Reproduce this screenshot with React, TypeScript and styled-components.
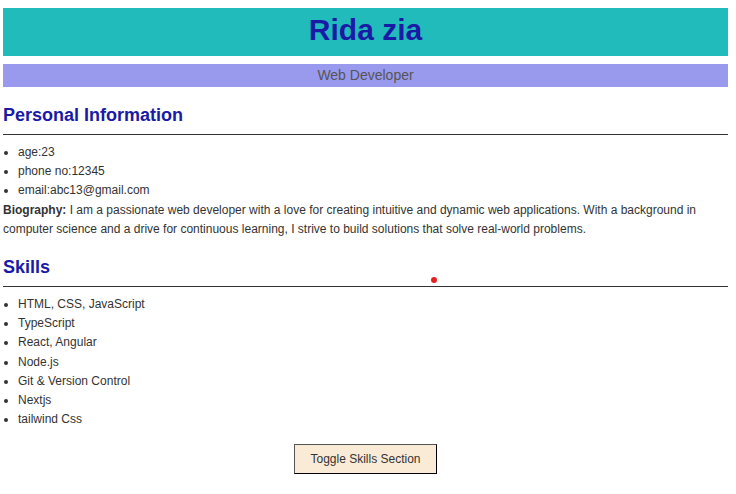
import React from "react";
import styled, { createGlobalStyle } from "styled-components";

const Global = createGlobalStyle`
  html, body { margin: 0; padding: 0; background: #ffffff; }
  body { font-family: "Liberation Sans", Arial, sans-serif; color: #333333; }
`;

const Page = styled.div`
  position: relative;
  padding: 8px 8px 20px 3px;
`;

const Header = styled.header`
  background: #22bbbb;
  padding: 5px 0 9px;
  text-align: center;
`;

const Name = styled.h1`
  margin: 0;
  font-size: 30px;
  line-height: 34px;
  font-weight: 700;
  color: #1a1aa6;
`;

const Role = styled.div`
  margin-top: 8px;
  background: #9999ee;
  height: 23px;
  line-height: 23px;
  font-size: 14px;
  color: #555555;
  text-align: center;
`;

const SectionTitle = styled.h2`
  margin: 18px 0 8px;
  padding-bottom: 8px;
  border-bottom: 1px solid #333333;
  font-size: 18px;
  line-height: 21px;
  font-weight: 700;
  color: #1a1aa6;
`;

const List = styled.ul`
  margin: 0;
  padding: 0 0 0 15px;
  font-size: 12px;
  line-height: 19.2px;
  color: #333333;
`;

const Item = styled.li``;

const Bio = styled.p`
  margin: 0;
  font-size: 12px;
  line-height: 19.2px;
  color: #333333;
`;

const Strong = styled.strong`
  font-weight: 700;
`;

const Actions = styled.div`
  display: flex;
  justify-content: center;
  margin-top: 15px;
`;

const ToggleButton = styled.button`
  height: 30px;
  padding: 0 15px;
  background: #faebd7;
  border: 1px solid #555555;
  border-right-color: #000000;
  border-bottom-color: #000000;
  font-family: "Liberation Sans", Arial, sans-serif;
  font-size: 12px;
  color: #333333;
  cursor: pointer;
`;

const Dot = styled.span`
  position: absolute;
  left: 431px;
  top: 277px;
  width: 6px;
  height: 6px;
  border-radius: 50%;
  background: #e52222;
`;

const personal = ["age:23", "phone no:12345", "email:abc13@gmail.com"];
const skills = [
  "HTML, CSS, JavaScript",
  "TypeScript",
  "React, Angular",
  "Node.js",
  "Git & Version Control",
  "Nextjs",
  "tailwind Css",
];

export default function App() {
  const [show, setShow] = React.useState(true);
  return (
    <>
      <Global />
      <Page>
        <Header>
          <Name>Rida zia</Name>
        </Header>
        <Role>Web Developer</Role>
        <SectionTitle>Personal Information</SectionTitle>
        <List>
          {personal.map((p) => (
            <Item key={p}>{p}</Item>
          ))}
        </List>
        <Bio>
          <Strong>Biography:</Strong> I am a passionate web developer with a love for creating
          intuitive and dynamic web applications. With a background in computer science and a
          drive for continuous learning, I strive to build solutions that solve real-world
          problems.
        </Bio>
        {show && (
          <>
            <SectionTitle>Skills</SectionTitle>
            <List>
              {skills.map((s) => (
                <Item key={s}>{s}</Item>
              ))}
            </List>
          </>
        )}
        <Actions>
          <ToggleButton onClick={() => setShow(!show)}>Toggle Skills Section</ToggleButton>
        </Actions>
        <Dot />
      </Page>
    </>
  );
}
